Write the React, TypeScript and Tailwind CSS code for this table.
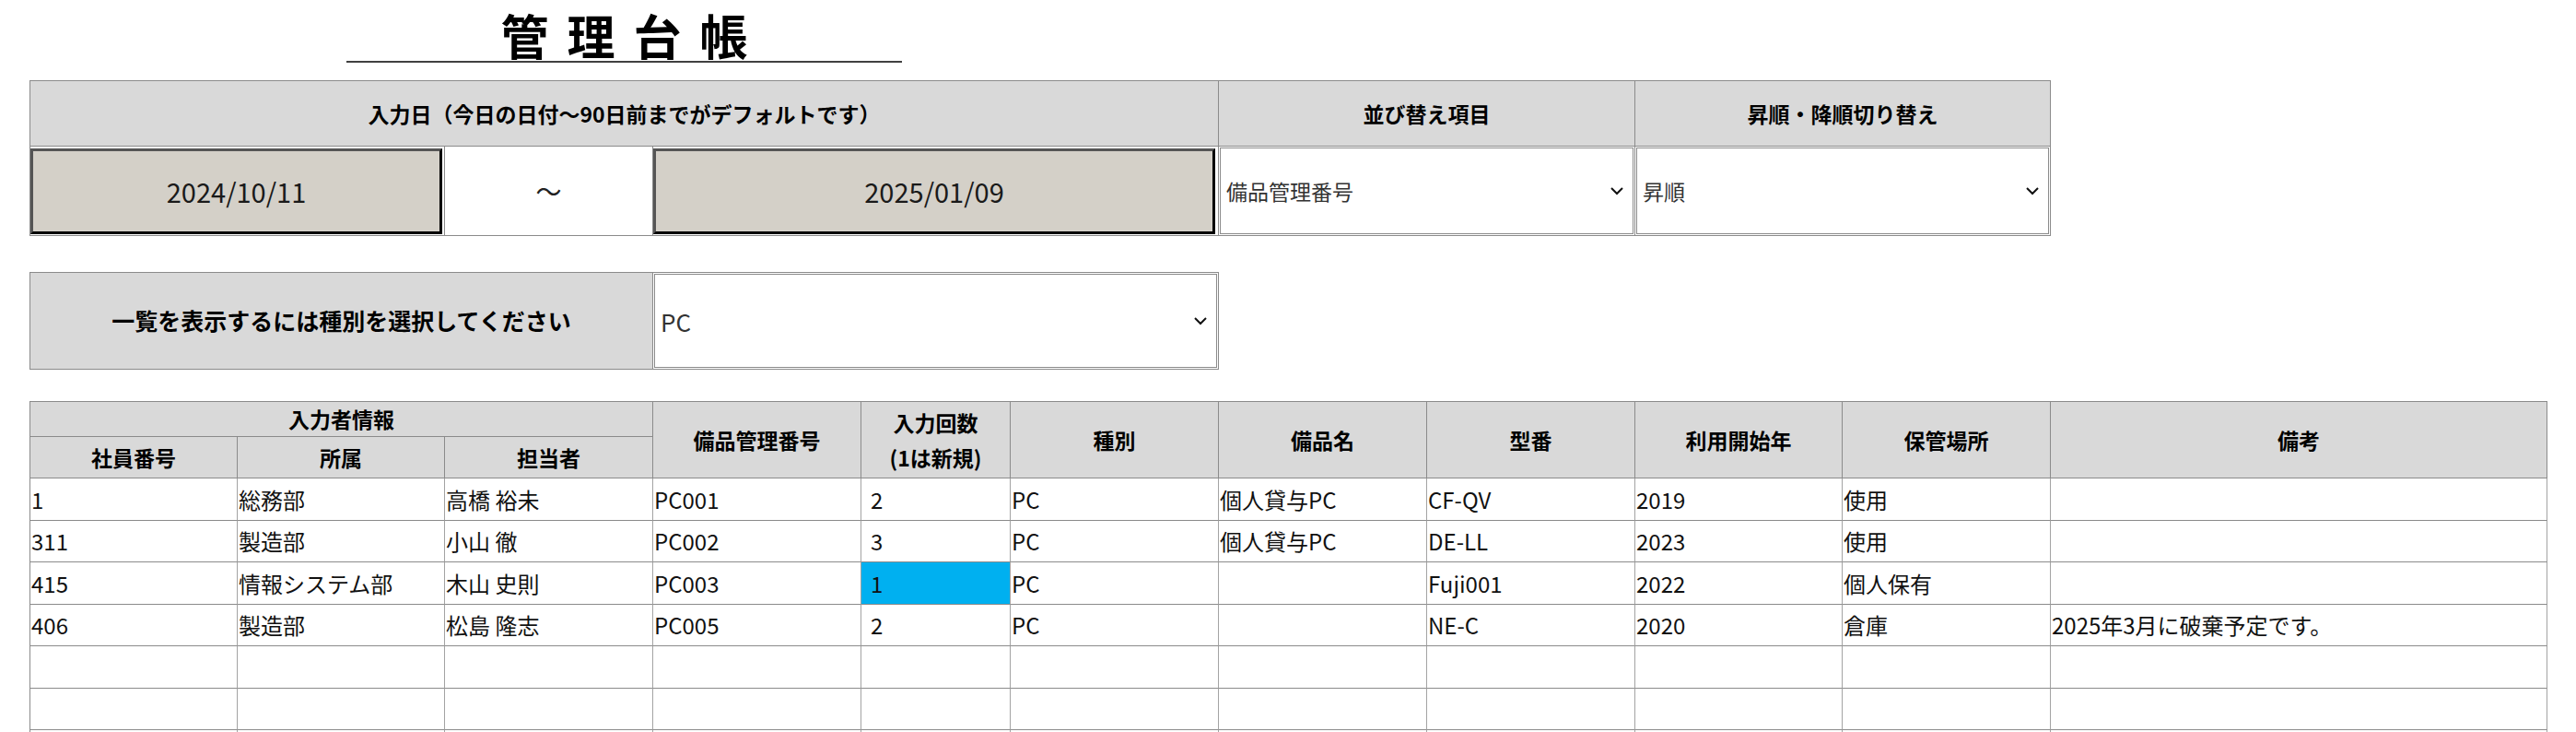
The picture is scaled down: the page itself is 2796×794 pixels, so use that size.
import React from "react";

const B = "border-[#8b8b8b]";
const HEAD = `bg-[#d9d9d9] border-r border-b ${B} flex items-center justify-center font-bold text-[23px] text-black`;
const FONT = { fontFamily: '"Noto Sans CJK JP", "Noto Sans", sans-serif' };

function Chevron() {
  return (
    <svg width="16" height="10" viewBox="0 0 16 10" className="shrink-0">
      <polyline points="2,2 8,8 14,2" fill="none" stroke="#111" strokeWidth="2" />
    </svg>
  );
}

function SelectBox({ value, size }: { value: string; size: string }) {
  return (
    <div className={`h-full w-full border ${B} bg-white flex items-center justify-between pl-[6px] pr-[9px]`}>
      <span className={`${size} text-[#333]`}>{value}</span>
      <Chevron />
    </div>
  );
}

function DateBox({ value }: { value: string }) {
  return (
    <div className="h-full w-full bg-[#d4d0c8] border-[3px] border-t-[#555555] border-l-[#555555] border-b-black border-r-black flex items-center justify-center text-[29px] text-[#1a1a1a]">
      {value}
    </div>
  );
}

type Row = string[];
const rows: Row[] = [
  ["1", "総務部", "高橋 裕未", "PC001", "2", "PC", "個人貸与PC", "CF-QV", "2019", "使用", ""],
  ["311", "製造部", "小山 徹", "PC002", "3", "PC", "個人貸与PC", "DE-LL", "2023", "使用", ""],
  ["415", "情報システム部", "木山 史則", "PC003", "1", "PC", "", "Fuji001", "2022", "個人保有", ""],
  ["406", "製造部", "松島 隆志", "PC005", "2", "PC", "", "NE-C", "2020", "倉庫", "2025年3月に破棄予定です。"],
  ["", "", "", "", "", "", "", "", "", "", ""],
  ["", "", "", "", "", "", "", "", "", "", ""],
  ["", "", "", "", "", "", "", "", "", "", ""],
];
const rowH = ["h-[46px]", "h-[45px]", "h-[46px]", "h-[45px]", "h-[46px]", "h-[45px]", "h-[46px]"];

export default function App() {
  return (
    <div className="bg-white w-[2796px] min-h-[794px] pl-[32px] text-black" style={FONT}>
      {/* Title */}
      <div className="ml-[344px] w-[603px] h-[68px] border-b-2 border-[#404040] flex items-center justify-center pt-[9px]">
        <span className="text-[52px] font-bold leading-none tracking-[20px] pl-[20px]">管理台帳</span>
      </div>

      {/* Date / sort table */}
      <div className={`mt-[19px] w-fit border-l border-t ${B} grid grid-cols-[225px_225px_226px_226px_162px_226px_226px_226px_225px_226px] grid-rows-[71px_97px]`}>
        <div className={`${HEAD} col-span-6`}>入力日（今日の日付～90日前までがデフォルトです）</div>
        <div className={`${HEAD} col-span-2`}>並び替え項目</div>
        <div className={`${HEAD} col-span-2`}>昇順・降順切り替え</div>

        <div className={`col-span-2 border-r border-b ${B} pt-[2px] pr-[2px] pb-px`}>
          <DateBox value="2024/10/11" />
        </div>
        <div className={`border-r border-b ${B} flex items-center justify-center text-[28px] text-[#222]`}>～</div>
        <div className={`col-span-3 border-r border-b ${B} pt-[2px] pr-[3px] pb-px`}>
          <DateBox value="2025/01/09" />
        </div>
        <div className={`col-span-2 border-r border-b ${B} p-px`}>
          <SelectBox value="備品管理番号" size="text-[23px]" />
        </div>
        <div className={`col-span-2 border-r border-b ${B} p-px`}>
          <SelectBox value="昇順" size="text-[23px]" />
        </div>
      </div>

      {/* Category select */}
      <div className={`mt-[39px] w-fit border-l border-t ${B} grid grid-cols-[676px_614px] grid-rows-[105px]`}>
        <div className={`bg-[#d9d9d9] border-r border-b ${B} flex items-center justify-center font-bold text-[25px]`}>
          一覧を表示するには種別を選択してください
        </div>
        <div className={`border-r border-b ${B} p-px`}>
          <SelectBox value="PC" size="text-[26px]" />
        </div>
      </div>

      {/* Main table */}
      <div className={`mt-[34px] w-fit border-l border-t ${B} grid grid-cols-[225px_225px_226px_226px_162px_226px_226px_226px_225px_226px_539px] grid-rows-[38px_45px]`}>
        <div className={`${HEAD} col-span-3`}>入力者情報</div>
        <div className={`${HEAD} row-span-2`}>備品管理番号</div>
        <div className={`${HEAD} row-span-2 flex-col leading-[38px]`}>
          <span>入力回数</span>
          <span>(1は新規)</span>
        </div>
        <div className={`${HEAD} row-span-2`}>種別</div>
        <div className={`${HEAD} row-span-2`}>備品名</div>
        <div className={`${HEAD} row-span-2`}>型番</div>
        <div className={`${HEAD} row-span-2`}>利用開始年</div>
        <div className={`${HEAD} row-span-2`}>保管場所</div>
        <div className={`${HEAD} row-span-2`}>備考</div>
        <div className={HEAD}>社員番号</div>
        <div className={HEAD}>所属</div>
        <div className={HEAD}>担当者</div>

        {rows.map((r, ri) =>
          r.map((c, ci) => {
            const hl = ri === 2 && ci === 4;
            return (
              <div
                key={`${ri}-${ci}`}
                className={`${rowH[ri]} border-r border-b border-r-[#a3a3a3] border-b-[#8b8b8b] flex items-center text-[24px] text-[#111] whitespace-nowrap overflow-hidden ${
                  ci === 4 ? "pl-[10px]" : "pl-[1px]"
                } ${hl ? "bg-[#00b0f0]" : "bg-white"}`}
              >
                {c}
              </div>
            );
          })
        )}
      </div>
    </div>
  );
}
